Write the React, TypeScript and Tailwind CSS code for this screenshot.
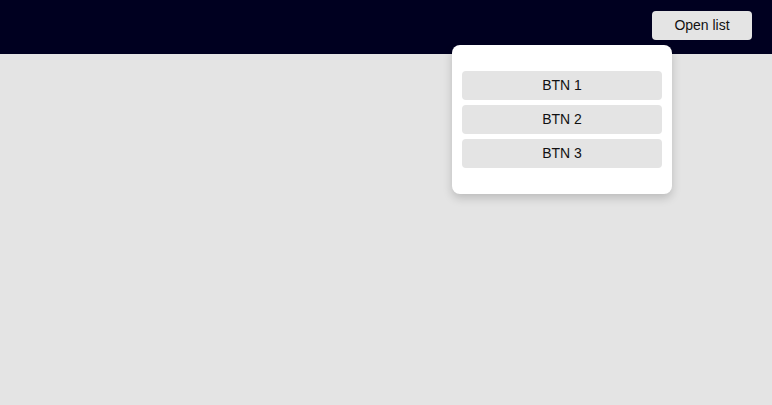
import { useState } from "react"

export default function App() {
	const [open] = useState(true)
	return (
		<div className="relative min-h-[405px] bg-[#e4e4e4] font-['Liberation_Sans',Arial,sans-serif] text-[14px] text-[#111]">
			<header className="flex h-[54px] items-start justify-end bg-[#000020] px-5 pt-[11px]">
				<div className="relative">
					<button className="h-[29px] w-[100px] rounded-[4px] bg-[#e4e4e4] text-[14px]">
						Open list
					</button>
					{open && (
						<div className="absolute right-[80px] top-[34px] z-10 flex w-[220px] flex-col gap-[5px] rounded-[8px] bg-white px-[10px] py-[26px] shadow-[0_4px_10px_rgba(0,0,0,0.18)]">
							{["BTN 1", "BTN 2", "BTN 3"].map((label) => (
								<button key={label} className="h-[29px] w-full rounded-[4px] bg-[#e4e4e4]">
									{label}
								</button>
							))}
						</div>
					)}
				</div>
			</header>
		</div>
	)
}
